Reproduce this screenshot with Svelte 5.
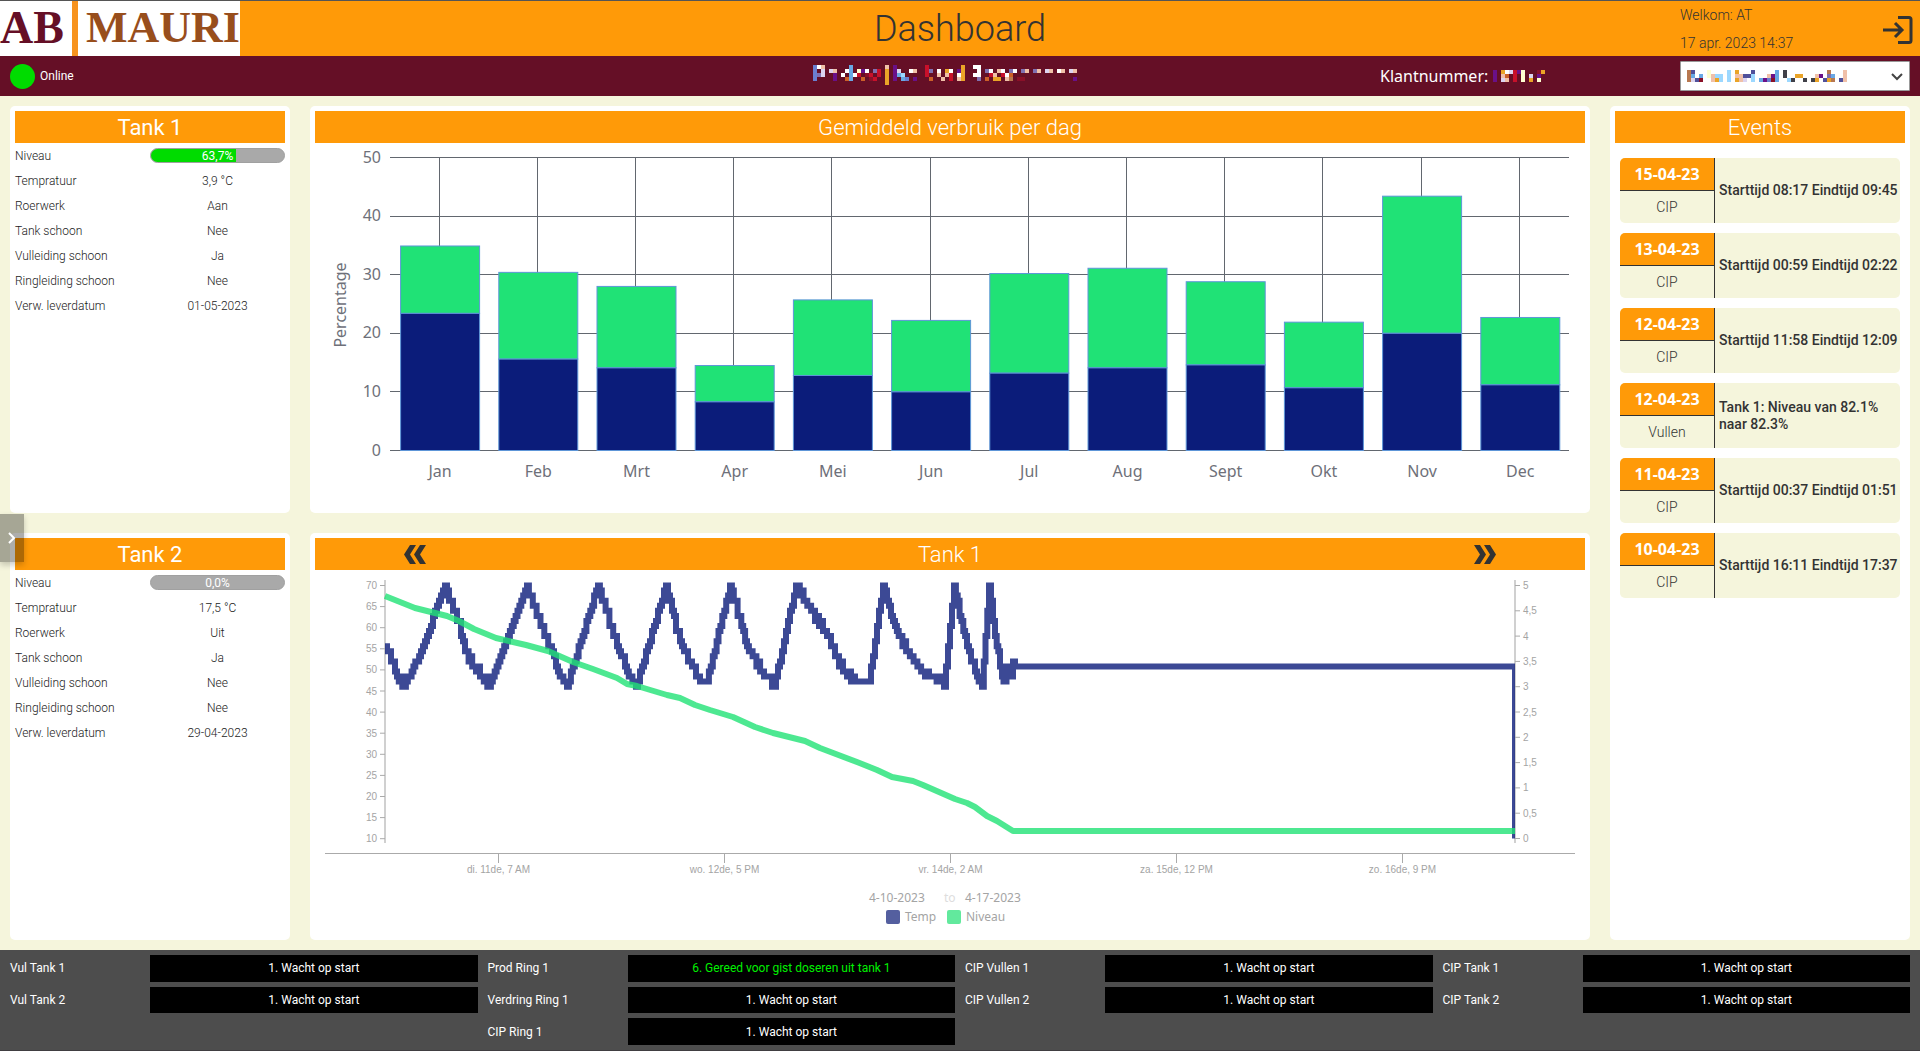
<script>
  // Tank overview
  const tanks = [
    {
      name: 'Tank 1',
      level: 63.7,
      rows: [
        ['Tempratuur', '3,9 °C'],
        ['Roerwerk', 'Aan'],
        ['Tank schoon', 'Nee'],
        ['Vulleiding schoon', 'Ja'],
        ['Ringleiding schoon', 'Nee'],
        ['Verw. leverdatum', '01-05-2023']
      ]
    },
    {
      name: 'Tank 2',
      level: 0,
      rows: [
        ['Tempratuur', '17,5 °C'],
        ['Roerwerk', 'Uit'],
        ['Tank schoon', 'Ja'],
        ['Vulleiding schoon', 'Nee'],
        ['Ringleiding schoon', 'Nee'],
        ['Verw. leverdatum', '29-04-2023']
      ]
    }
  ];

  const events = [
    { date: '15-04-23', type: 'CIP', text: 'Starttijd 08:17 Eindtijd 09:45' },
    { date: '13-04-23', type: 'CIP', text: 'Starttijd 00:59 Eindtijd 02:22' },
    { date: '12-04-23', type: 'CIP', text: 'Starttijd 11:58 Eindtijd 12:09' },
    { date: '12-04-23', type: 'Vullen', text: 'Tank 1: Niveau van 82.1% naar 82.3%' },
    { date: '11-04-23', type: 'CIP', text: 'Starttijd 00:37 Eindtijd 01:51' },
    { date: '10-04-23', type: 'CIP', text: 'Starttijd 16:11 Eindtijd 17:37' }
  ];

  const idle = '1. Wacht op start';
  const processes = [
    [['Vul Tank 1', idle], ['Vul Tank 2', idle]],
    [['Prod Ring 1', '6. Gereed voor gist doseren uit tank 1', true], ['Verdring Ring 1', idle], ['CIP Ring 1', idle]],
    [['CIP Vullen 1', idle], ['CIP Vullen 2', idle]],
    [['CIP Tank 1', idle], ['CIP Tank 2', idle]]
  ];

  // Usage per month: [label, lower part, total]
  const months = [
    ['Jan', 23.4, 34.9],
    ['Feb', 15.6, 30.4],
    ['Mrt', 14.1, 28],
    ['Apr', 8.3, 14.5],
    ['Mei', 12.8, 25.7],
    ['Jun', 10, 22.2],
    ['Jul', 13.2, 30.2],
    ['Aug', 14.1, 31.1],
    ['Sept', 14.6, 28.8],
    ['Okt', 10.7, 21.9],
    ['Nov', 20, 43.4],
    ['Dec', 11.2, 22.7]
  ];
  const barLeft = 76;
  const barStep = 98.2;
  const barX = (i) => barLeft + barStep * (i + 0.5);
  const barY = (v) => 307.5 - v * 5.86;

  // Temperature: turning points as [x, value on the right axis]
  const tempPoints = [
    [70, 3.8], [82, 3.2], [89, 3], [106, 3.7], [130, 5], [144, 4.25], [150, 3.72], [159, 3.4],
    [167, 3.2], [174, 3], [193, 4], [212, 5], [237, 3.65], [243, 3.33], [252, 3], [283, 5],
    [302, 3.8], [312, 3.3], [321, 3], [351, 5], [365, 3.86], [377, 3.4], [385, 3.1], [392, 3.1],
    [415, 5], [432, 3.83], [447, 3.3], [453, 3.15], [459, 3], [481, 5], [498, 4.45], [512, 4.02],
    [520, 3.6], [530, 3.27], [540, 3.1], [554, 3.1], [568, 5], [580, 4.15], [593, 3.66],
    [608, 3.3], [618, 3.15], [627, 3.1], [629, 3], [639, 5], [652, 3.76], [662, 3.23], [667, 3],
    [674, 5], [680, 4], [685, 3.4], [687, 3.2], [690, 3.1], [693, 3.4], [696, 3.2], [698, 3.5],
    [700, 3.4]
  ];
  const tempY = (v) => 268.5 - v * 50.6;

  function tempPath() {
    let d = `M70 ${tempY(3.8)}`;
    let n = 0;
    for (let i = 1; i < tempPoints.length; i++) {
      const [x0, v0] = tempPoints[i - 1];
      const [x1, v1] = tempPoints[i];
      const count = Math.max(1, Math.round((x1 - x0) / 2));
      for (let k = 1; k <= count; k++) {
        const wobble = k < count && v1 < v0 ? (n % 2 ? 0.05 : -0.05) : 0;
        const v = Math.round((v0 + ((v1 - v0) * k) / count + wobble) * 10) / 10;
        d += `H${(x0 + ((x1 - x0) * k) / count).toFixed(1)}V${tempY(v).toFixed(1)}`;
        n++;
      }
    }
    return d + `H1200V${tempY(0)}`;
  }

  const levelLine =
    '70,26 100,38 132,46 144,51 159,59 181,68 211,75 233,81 258,92 278,99 302,108 312,114 322,116 ' +
    '352,125 365,128 380,135 395,140 418,147 440,157 458,163 490,171 505,178 542,192 562,200 577,207 ' +
    '598,211 608,215 640,229 652,233 660,237 672,246 682,251 698,261 1200,261';

  const leftTicks = Array.from({ length: 13 }, (_, i) => 70 - i * 5);
  const rightTicks = Array.from({ length: 11 }, (_, i) => 5 - i * 0.5);
  const timeTicks = ['di. 11de, 7 AM', 'wo. 12de, 5 PM', 'vr. 14de, 2 AM', 'za. 15de, 12 PM', 'zo. 16de, 9 PM'];

  // Masked customer data, one character per cell
  const inks = {
    b: '#6a7fd0', l: '#68a8e4', w: '#ffffff', p: '#6a1088', v: '#8070b0', s: '#f0c0a8',
    r: '#c8102a', d: '#8a1028', g: '#eaa428', o: '#cc6028', c: '#dcd4f0', n: '#404048',
    t: '#9cd8ff', y: '#ffffd0', k: '#b87850', i: '#50509a'
  };
  const nameMask = [
    'bws......l........s.p.......r........g..ww........................',
    'b.c.cs..wl.ypw.vr.g.pc..ws..rv.w.gw.pg...w.vw.sw.vw.vs.vs.cs.ws.cs',
    'bvc..p.w.lwr.dr.r.g.plt.....r..s.sr.wg..ww..rs.rwo................',
    'b....p..ol..o.dr..g.p.lb.p...o..s.r.sg...v.o.gg.sk.dd............p',
    '..................g...............................................'
  ];
  const numberMask = ['p.gwcrpy...dg', 'p.so.r.y.c.p.', 'p.cs.r.y.g.y.'];
  const selectMask = [
    'ki...y....t.g...i.....l.n..........k...s',
    'kl.l.ystt.t.ssiit...spl.n..gg...sp.vl..s',
    'kcid..sgt.t.gsc.t.lpbdl..tn..n.ng.igk.is'
  ];

  let customer = $state('');
  let menuOpen = $state(false);
</script>

{#snippet mask(rows, cls)}
  <svg class={cls} viewBox="0 0 {rows[0].length * 4} {rows.length * 4}" width={rows[0].length * 4} height={rows.length * 4} shape-rendering="crispEdges" aria-hidden="true">
    {#each rows as row, y}
      {#each [...row] as cell, x}
        {#if inks[cell]}
          <rect x={x * 4} y={y * 4} width="4" height="4" fill={inks[cell]} />
        {/if}
      {/each}
    {/each}
  </svg>
{/snippet}

<div class="page">
  <header class="top">
    <div class="logo">
      <span class="ab">AB</span>
      <span class="mauri">MAURI</span>
    </div>
    <h1>Dashboard</h1>
    <div class="user">
      <div class="who">
        <span>Welkom: AT</span>
        <span>17 apr. 2023 14:37</span>
      </div>
      <button class="logout" aria-label="Uitloggen">
        <svg viewBox="0 0 30 28" width="30" height="28" fill="none" stroke="#333" stroke-width="3">
          <path d="M15 1.5H26Q28 1.5 28 3.5V24.500Q28 26.500 26 26.500H15" />
          <path d="M0 14H18M12 7L19 14L12 21" />
        </svg>
      </button>
    </div>
  </header>

  <div class="bar">
    <div class="status"><span class="dot"></span>Online</div>
    <div class="customer">{@render mask(nameMask, 'mask')}</div>
    <div class="number">Klantnummer: {@render mask(numberMask, 'mask')}</div>
    <div class="picker">
      <select bind:value={customer} aria-label="Klant">
        <option value=""></option>
      </select>
      {@render mask(selectMask, 'picked')}
      <svg class="caret" viewBox="0 0 12 8" width="12" height="8" fill="none" stroke="#444" stroke-width="2">
        <path d="M1 1L6 6L11 1" />
      </svg>
    </div>
  </div>

  <main>
    <div class="column">
      {#each tanks as tank}
        <section class="card">
          <h2 class="strong">{tank.name}</h2>
          <table>
            <tbody>
              <tr>
                <th scope="row">Niveau</th>
                <td>
                  <div class="level">
                    <div class="fill" style:width="{tank.level}%"></div>
                    <span>{tank.level.toFixed(1).replace('.', ',')}%</span>
                  </div>
                </td>
              </tr>
              {#each tank.rows as [label, value]}
                <tr>
                  <th scope="row">{label}</th>
                  <td>{value}</td>
                </tr>
              {/each}
            </tbody>
          </table>
        </section>
      {/each}
    </div>

    <div class="column">
      <section class="card">
        <h2>Gemiddeld verbruik per dag</h2>
        <svg class="chart bars" viewBox="0 0 1270 365">
          {#each [0, 10, 20, 30, 40, 50] as v}
            <line class="grid" x1="75" x2="1254" y1={Math.floor(barY(v)) + 0.5} y2={Math.floor(barY(v)) + 0.5} />
            <text x="66" y={barY(v) + 5} text-anchor="end">{v}</text>
          {/each}
          {#each months as [label, low, total], i}
            <line class="grid" x1={Math.floor(barX(i)) - 0.5} x2={Math.floor(barX(i)) - 0.5} y1="14.500" y2="307.500" />
            <rect class="high" x={barX(i) - 39.5} width="79" y={barY(total)} height={barY(low) - barY(total)} />
            <rect class="low" x={barX(i) - 39.5} width="79" y={barY(low)} height={barY(0) - barY(low)} />
            <text x={barX(i)} y="334" text-anchor="middle">{label}</text>
          {/each}
          <text transform="translate(31 162) rotate(-90)" text-anchor="middle">Percentage</text>
        </svg>
      </section>

      <section class="card">
        <h2 class="switch">
          <button aria-label="Vorige tank">
            <svg viewBox="0 0 22 19" width="22" height="19" fill="#333">
              <path d="M6 0H12L6 9.500L12 19H6L0 9.500ZM16 0H22L16 9.500L22 19H16L10 9.500Z" />
            </svg>
          </button>
          Tank 1
          <button aria-label="Volgende tank">
            <svg viewBox="0 0 22 19" width="22" height="19" fill="#333">
              <path d="M0 0H6L12 9.500L6 19H0L6 9.500ZM10 0H16L22 9.500L16 19H10L16 9.500Z" />
            </svg>
          </button>
        </h2>
        <svg class="chart lines" viewBox="0 0 1270 365">
          <clipPath id="plot"><rect x="70" y="5" width="1130" height="264" /></clipPath>
          <path class="axis" d="M70 10V273M1200 10V273" />
          {#each leftTicks as v, i}
            <path class="tick" d="M65 {15.5 + i * 21.1}h5" />
            <text x="62" y={19 + i * 21.1} text-anchor="end">{v}</text>
          {/each}
          {#each rightTicks as v, i}
            <path class="tick" d="M1200 {15.5 + i * 25.3}h5" />
            <text x="1208" y={19 + i * 25.3}>{String(v).replace('.', ',')}</text>
          {/each}
          <path class="tick" d="M10 283.500H1260" />
          {#each timeTicks as label, i}
            <path class="tick" d="M{183.5 + i * 226} 284v9" />
            <text x={183.5 + i * 226} y="303" text-anchor="middle">{label}</text>
          {/each}
          <path class="temp" d={tempPath()} clip-path="url(#plot)" />
          <polyline class="niveau" points={levelLine} />
          <g class="legend">
            <text x="554" y="332">4-10-2023</text>
            <text class="faint" x="629" y="332">to</text>
            <text x="650" y="332">4-17-2023</text>
            <rect x="571" y="340" width="14" height="14" rx="2" fill="#545f9f" />
            <text x="590" y="351">Temp</text>
            <rect x="632" y="340" width="14" height="14" rx="2" fill="#62e99d" />
            <text x="651" y="351">Niveau</text>
          </g>
        </svg>
      </section>
    </div>

    <section class="card">
      <h2>Events</h2>
      <ul>
        {#each events as event}
          <li>
            <div class="when">
              <strong>{event.date}</strong>
              <span>{event.type}</span>
            </div>
            <p>{event.text}</p>
          </li>
        {/each}
      </ul>
    </section>
  </main>

  <footer>
    {#each processes as group}
      <div class="group">
        {#each group as [label, state, active]}
          <div class="process">
            <span>{label}</span>
            <output class:active>{state}</output>
          </div>
        {/each}
      </div>
    {/each}
  </footer>

  <button class="drawer" aria-label="Menu" aria-expanded={menuOpen} onclick={() => (menuOpen = !menuOpen)}>
    <svg viewBox="0 0 8 12" width="8" height="12" fill="none" stroke="#fff" stroke-width="2">
      <path d="M1 1L6 6L1 11" />
    </svg>
  </button>
</div>

<style>
  :global(body) {
    margin: 0;
    background: #f5f5dc;
  }

  .page {
    display: flex;
    flex-direction: column;
    box-sizing: border-box;
    min-height: 100vh;
    border-top: 1px solid #555;
    border-bottom: 1px solid #403e41;
    font-family: Roboto, sans-serif;
    font-size: 12px;
    font-weight: 300;
    color: #333;
  }

  button {
    padding: 0;
    border: 0;
    background: none;
    cursor: pointer;
  }

  svg {
    display: block;
  }

  /* header */
  .top {
    display: grid;
    grid-template-columns: 240px 1fr 240px;
    height: 55px;
    background: #ff9a08;
  }

  .logo {
    display: flex;
    font: bold 44px/44px 'Liberation Serif', serif;
    background: #f7931e;
    gap: 6px;
  }

  .logo span {
    box-sizing: border-box;
    padding-top: 5px;
    background: #fff;
  }

  .ab {
    width: 72px;
    font-size: 46px;
    color: #650f26;
  }

  .mauri {
    flex: 1;
    padding-left: 8px;
    color: #984e1c;
  }

  h1 {
    margin: 0;
    font-size: 36px;
    font-weight: 300;
    line-height: 57px;
    text-align: center;
  }

  .user {
    display: flex;
    justify-content: space-between;
    align-items: center;
    padding-right: 7px;
    font-size: 14px;
  }

  .who {
    display: flex;
    flex-direction: column;
    line-height: 28px;
    padding-bottom: 2px;
  }

  .bar {
    display: grid;
    grid-template-columns: 480px 1fr 480px 230px;
    align-items: center;
    height: 40px;
    padding-right: 10px;
    color: #fff;
    background: #650f26;
  }

  .status {
    display: flex;
    align-items: center;
    gap: 5px;
    padding-left: 10px;
    font-weight: 400;
  }

  .dot {
    width: 25px;
    height: 25px;
    border-radius: 50%;
    background: #00dc00;
  }

  .customer {
    display: flex;
    justify-content: center;
    padding-left: 210px;
    padding-bottom: 2px;
  }

  .number {
    display: flex;
    align-items: center;
    gap: 5px;
    padding-left: 180px;
    font: 400 16px/40px 'Noto Sans', sans-serif;
  }

  .picker {
    position: relative;
  }

  select {
    display: block;
    width: 100%;
    height: 30px;
    border: 1px solid #999;
    border-radius: 1px;
    background: #fff;
    appearance: none;
  }

  .picked,
  .caret {
    position: absolute;
    pointer-events: none;
  }

  .picked {
    left: 7px;
    top: 9px;
  }

  .caret {
    right: 7px;
    top: 12px;
  }

  /* cards */
  main {
    display: grid;
    grid-template-columns: 14fr 64fr 15fr;
    gap: 20px;
    flex: 1;
    padding: 10px;
  }

  .column {
    display: grid;
    grid-template-rows: 1fr 1fr;
    gap: 20px;
    min-width: 0;
  }

  .card {
    padding: 5px;
    border-radius: 5px;
    background: #fff;
    min-width: 0;
  }

  h2 {
    box-sizing: border-box;
    height: 32px;
    margin: 0;
    font-size: 22px;
    font-weight: 300;
    line-height: 34px;
    text-align: center;
    color: #fff;
    background: #ff9a08;
  }

  h2.strong {
    font-weight: 400;
  }

  .switch {
    display: grid;
    grid-template-columns: 200px 1fr 200px;
  }

  .switch button {
    display: grid;
    place-items: center;
    height: 32px;
  }

  table {
    width: 100%;
    border-collapse: collapse;
    table-layout: fixed;
    color: #222;
  }

  tr {
    height: 25px;
  }

  th,
  td {
    padding: 0;
    font-weight: 300;
  }

  th {
    text-align: left;
  }

  td {
    text-align: center;
  }

  .level {
    position: relative;
    box-sizing: border-box;
    height: 15px;
    overflow: hidden;
    border: 1px solid #a0a0a0;
    border-radius: 8px;
    font-weight: 400;
    line-height: 14px;
    color: #fff;
    background: #a9a9a9;
  }

  .fill {
    height: 100%;
    background: #00dc00;
  }

  .level span {
    position: absolute;
    inset: 0;
  }

  .chart {
    width: 100%;
  }

  .bars text {
    font: 16px 'Noto Sans', sans-serif;
    fill: #6e7079;
  }

  .grid {
    stroke: #62676f;
  }

  .high,
  .low {
    stroke: #5e96d8;
  }

  .high {
    fill: #20e276;
  }

  .low {
    fill: #0b1c7a;
  }

  .lines text {
    font: 10px 'Liberation Sans', sans-serif;
    fill: #a4a4a4;
  }

  .lines .legend text {
    font: 12px 'Noto Sans', sans-serif;
  }

  .lines .legend .faint {
    fill: #ddd;
  }

  .axis {
    fill: none;
    stroke: #d0d0d0;
    stroke-width: 2;
  }

  .tick {
    stroke: #aaa;
  }

  .temp,
  .niveau {
    fill: none;
    stroke-width: 6;
    opacity: 0.8;
  }

  .temp {
    stroke: #0b1c7a;
  }

  .niveau {
    stroke: #20e276;
    stroke-linejoin: round;
  }

  /* events */
  ul {
    display: flex;
    flex-direction: column;
    gap: 10px;
    margin: 0;
    padding: 15px 5px;
    list-style: none;
  }

  li {
    display: flex;
    min-height: 65px;
    overflow: hidden;
    border-radius: 5px;
    background: #f5f5dc;
  }

  .when {
    display: flex;
    flex-direction: column;
    flex: none;
    width: 94px;
    border-right: 1px solid #333;
    font-size: 14px;
    line-height: 32px;
    text-align: center;
  }

  .when strong {
    border-bottom: 1px solid #333;
    font-family: 'Noto Sans', sans-serif;
    font-size: 16px;
    font-weight: 700;
    color: #fff;
    background: #ff9a08;
  }

  p {
    align-self: center;
    margin: 0;
    padding-left: 4px;
    font-size: 14px;
    font-weight: 500;
    line-height: 17px;
  }

  /* process states */
  footer {
    display: grid;
    grid-template-columns: repeat(4, 1fr);
    gap: 10px;
    box-sizing: border-box;
    height: 100px;
    padding: 5px 10px;
    font-weight: 400;
    color: #fff;
    background: #4d4d4d;
  }

  .group {
    display: grid;
    grid-template-rows: repeat(3, 1fr);
    gap: 5px;
  }

  .process {
    display: grid;
    grid-template-columns: 3fr 7fr;
    align-items: center;
  }

  output {
    display: grid;
    place-items: center;
    height: 100%;
    background: #000;
  }

  output.active {
    color: #00f000;
  }

  .drawer {
    position: fixed;
    left: 0;
    top: 514px;
    display: flex;
    align-items: center;
    justify-content: flex-end;
    width: 24px;
    height: 48px;
    padding-right: 8px;
    background: rgba(0, 0, 0, 0.32);
    box-shadow: 0 3px 6px rgba(0, 0, 0, 0.2);
  }
</style>
